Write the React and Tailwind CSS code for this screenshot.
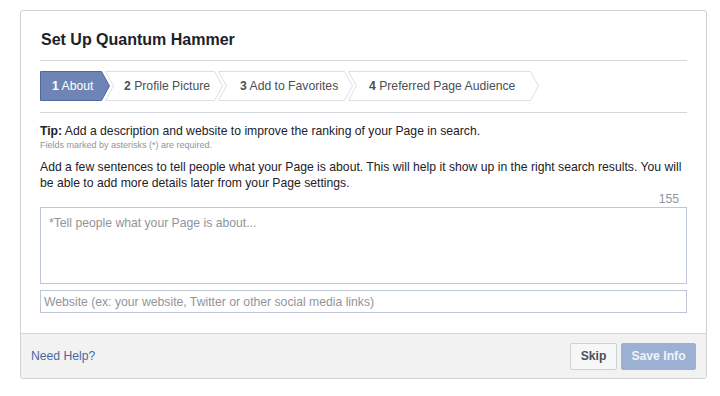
import React from 'react'

const TABS = [
  { num: '1', label: 'About', w: 70, pl: 12, active: true, first: true },
  { num: '2', label: 'Profile Picture', w: 118, pl: 19 },
  { num: '3', label: 'Add to Favorites', w: 135, pl: 22 },
  { num: '4', label: 'Preferred Page Audience', w: 191, pl: 21 },
]

function Tab({ tab }) {
  const { w, first, active } = tab
  const h = 30
  const pts = first
    ? `0.5,0.5 ${w - 8.5},0.5 ${w - 0.5},15 ${w - 8.5},29.5 0.5,29.5`
    : `0.5,0.5 ${w - 8.5},0.5 ${w - 0.5},15 ${w - 8.5},29.5 0.5,29.5 8.5,15`
  return (
    <div
      className={`relative flex h-[30px] shrink-0 items-center ${first ? '' : '-ml-[5px]'}`}
      style={{ width: w, paddingLeft: tab.pl }}
    >
      <svg className="absolute inset-0" width={w} height={h} viewBox={`0 0 ${w} ${h}`}>
        <polygon
          points={pts}
          fill={active ? '#6d84b4' : '#ffffff'}
          stroke={active ? '#4e69a2' : '#dcdfe6'}
          strokeWidth="1"
        />
      </svg>
      <span className={`relative text-[12.2px] ${active ? 'text-white' : 'text-[#4b4f56]'}`}>
        <b>{tab.num}</b> {tab.label}
      </span>
    </div>
  )
}

export default function App() {
  return (
    <div
      className="min-h-[396px] bg-white pt-[10px]"
      style={{ fontFamily: '"Liberation Sans", Arial, sans-serif' }}
    >
      <div className="ml-[20px] w-[687px] overflow-hidden rounded-[3px] border border-[#cfd1d5]">
        <div className="px-[19px]">
          <div className="border-b border-[#d3d6db] pb-[10px] pt-[19px]">
            <h1 className="pl-[1px] text-[16px] font-bold leading-[20px] text-[#1d2129]">
              Set Up Quantum Hammer
            </h1>
          </div>

          <div className="flex border-b border-[#d3d6db] pb-[11px] pt-[10px]">
            {TABS.map((t) => (
              <Tab key={t.num} tab={t} />
            ))}
          </div>

          <p className="mt-[10px] text-[12.2px] leading-[16px] text-[#1d2129]">
            <b>Tip:</b> Add a description and website to improve the ranking of your Page in search.
          </p>
          <p className="text-[9px] leading-[12px] text-[#90949c]">
            Fields marked by asterisks (*) are required.
          </p>
          <p className="mt-[8px] text-[12.2px] leading-[16px] text-[#1d2129]">
            Add a few sentences to tell people what your Page is about. This will help it show up in
            the right search results. You will be able to add more details later from your Page
            settings.
          </p>
          <div className="pr-[8px] pt-[1px] text-right text-[12.2px] leading-[14px] text-[#90949c]">
            155
          </div>

          <textarea
            className="mt-[1px] block h-[77px] w-full resize-none border border-[#bdc7d8] px-[8px] py-[7px] text-[12.2px] leading-[16px] text-[#1d2129] outline-none placeholder:text-[#90949c]"
            placeholder="*Tell people what your Page is about..."
          />
          <input
            className="mt-[6px] block h-[23px] w-full border border-[#bdc7d8] px-[3px] text-[12.2px] text-[#1d2129] outline-none placeholder:text-[#90949c]"
            placeholder="Website (ex: your website, Twitter or other social media links)"
          />
        </div>

        <div className="mt-[20px] flex h-[45px] items-center justify-between border-t border-[#d3d6db] bg-[#f2f2f2] pl-[10px] pr-[10px]">
          <a className="text-[12.2px] text-[#4b67a1]">Need Help?</a>
          <div className="flex gap-[4px]">
            <button className="h-[27px] w-[47px] rounded-[2px] border border-[#ced0d4] bg-[#f6f7f9] text-[12.2px] font-bold text-[#4b4f56]">
              Skip
            </button>
            <button className="h-[27px] w-[75px] rounded-[2px] border border-[#9cb0d4] bg-[#9cb0d4] text-[12.2px] font-bold text-[#f2f4f8]">
              Save Info
            </button>
          </div>
        </div>
      </div>
    </div>
  )
}
